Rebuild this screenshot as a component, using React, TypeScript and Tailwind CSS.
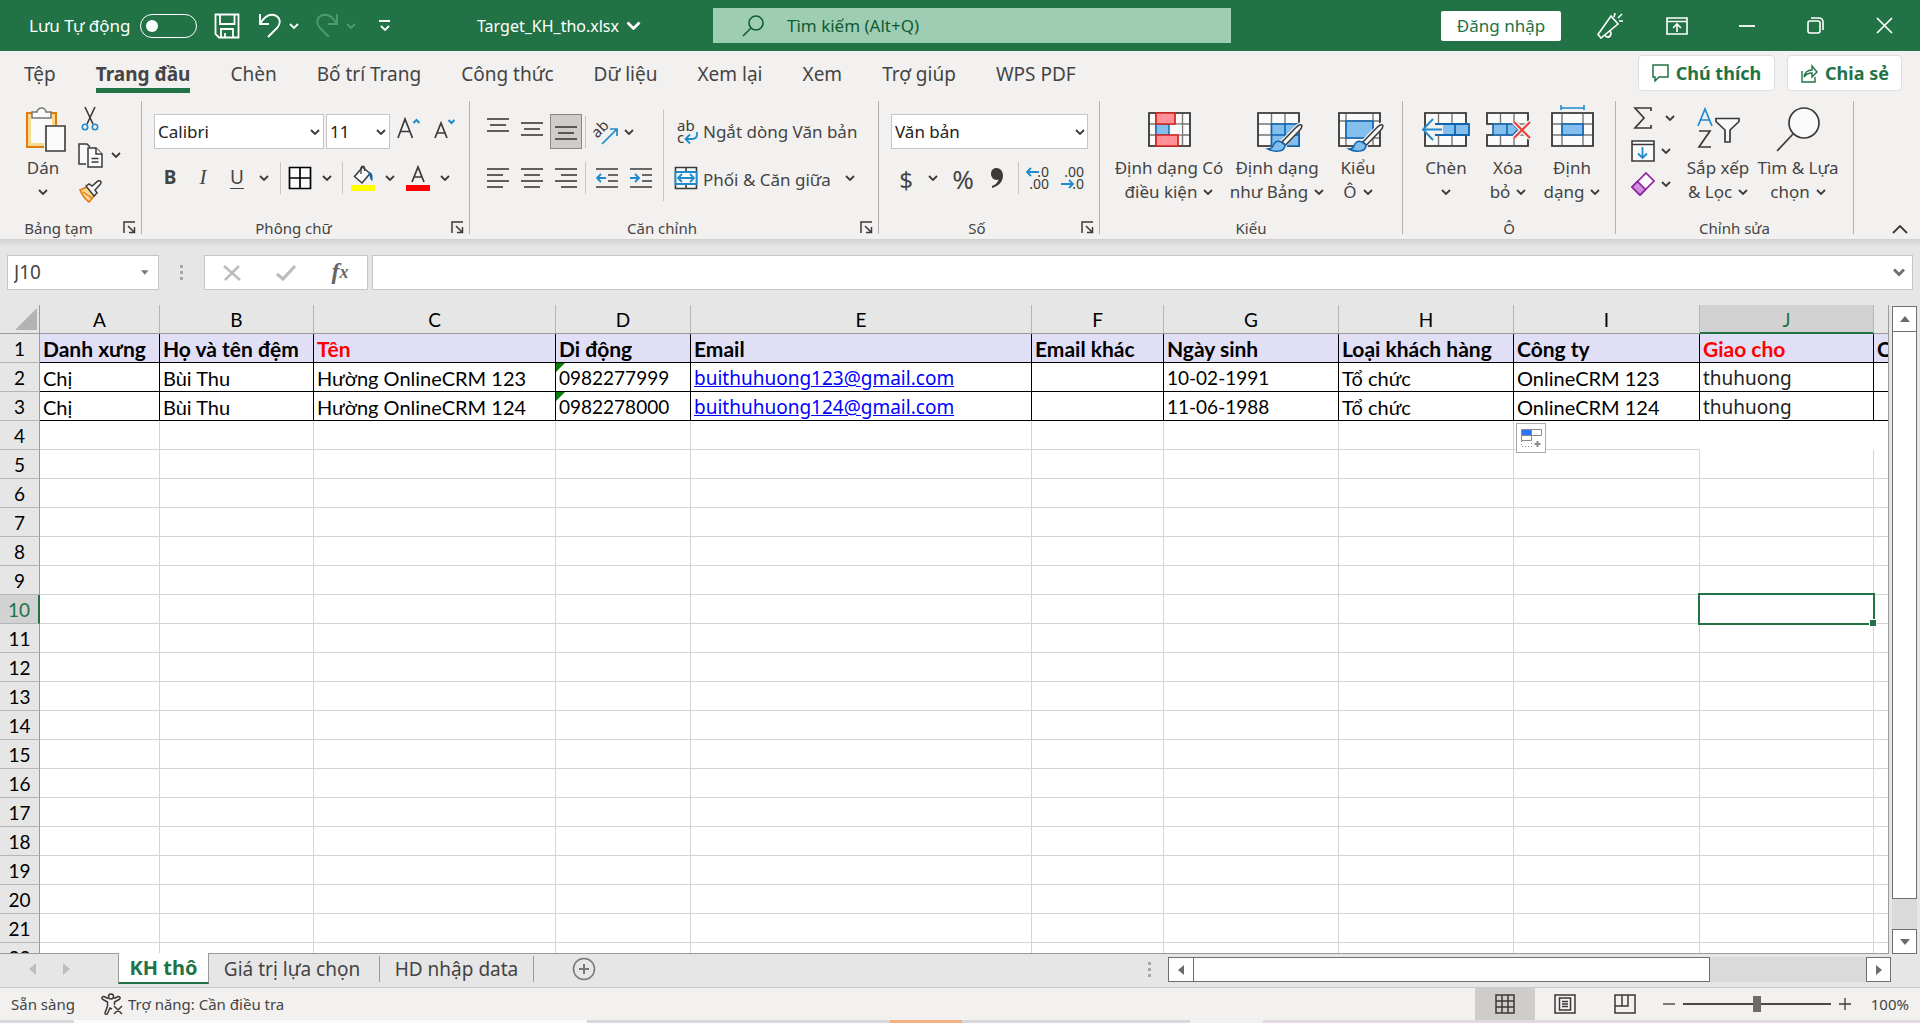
import React from 'react';
import clsx from 'clsx';

const INK = '#3b3a38';
const BLUE = '#1e8bcd';
const DEEP = '#0f64b0';
const SKY = '#83beec';

const menuTabs = ['Tệp', 'Trang đầu', 'Chèn', 'Bố trí Trang', 'Công thức', 'Dữ liệu', 'Xem lại', 'Xem', 'Trợ giúp', 'WPS PDF'];

const columns = [
  { id: 'A', width: 'w-[120px]' },
  { id: 'B', width: 'w-[154px]' },
  { id: 'C', width: 'w-[242px]' },
  { id: 'D', width: 'w-[135px]' },
  { id: 'E', width: 'w-[341px]' },
  { id: 'F', width: 'w-[132px]' },
  { id: 'G', width: 'w-[175px]' },
  { id: 'H', width: 'w-[175px]' },
  { id: 'I', width: 'w-[186px]' },
  { id: 'J', width: 'w-[174px]' },
  { id: 'K', width: '' },
];

const headings = ['Danh xưng', 'Họ và tên đệm', 'Tên', 'Di động', 'Email', 'Email khác', 'Ngày sinh', 'Loại khách hàng', 'Công ty', 'Giao cho', 'C'];
const requiredHeadings = ['Tên', 'Giao cho'];

const records = [
  ['Chị', 'Bùi Thu', 'Hường OnlineCRM 123', '0982277999', 'buithuhuong123@gmail.com', '', '10-02-1991', 'Tổ chức', 'OnlineCRM 123', 'thuhuong', ''],
  ['Chị', 'Bùi Thu', 'Hường OnlineCRM 124', '0982278000', 'buithuhuong124@gmail.com', '', '11-06-1988', 'Tổ chức', 'OnlineCRM 124', 'thuhuong', ''],
];

const emptyRows = Array.from({ length: 19 }, (_, i) => i + 4);

const Chevron = ({ className = 'w-[10px] h-[6px]', stroke = INK }: { className?: string; stroke?: string }) => (
  <svg viewBox="0 0 10 6" className={clsx('shrink-0', className)} fill="none" stroke={stroke} strokeWidth="1.8">
    <path d="M1 1l4 4 4-4" />
  </svg>
);

const Launcher = () => (
  <svg viewBox="0 0 13 13" className="w-[13px] h-[13px]" fill="none" stroke={INK} strokeWidth="1.5">
    <path d="M1 12V1h11M5 5l6 6M11.5 6v5.500H6" />
  </svg>
);

const Group = ({ label, launcher, className, children }: { label: string; launcher?: boolean; className: string; children: React.ReactNode }) => (
  <section aria-label={label} className={clsx('flex flex-col shrink-0 h-[133px] border-r border-[#b3b1af]', className)}>
    <div className="flex shrink-0 h-[114px]">{children}</div>
    <div className={clsx('flex items-center shrink-0 h-[19px] pt-[6px]', launcher && 'pr-[5px]')}>
      <span className={clsx('flex-1 text-center text-[15px] leading-5', launcher && 'pr-[6px]')}>{label}</span>
      {launcher && (
        <button aria-label={`Cài đặt ${label}`}>
          <Launcher />
        </button>
      )}
    </div>
  </section>
);

const BigButton = ({ icon, first, second, className }: { icon: React.ReactNode; first: string; second?: string; className: string }) => (
  <button className={clsx('flex flex-col items-center shrink-0 pt-[6px] text-[17px] leading-6 whitespace-nowrap', className)}>
    <span className="h-[45px] mb-1">{icon}</span>
    <span>{first}</span>
    <span className="flex items-center gap-[6px] h-6">
      {second}
      <Chevron />
    </span>
  </button>
);

const IconButton = ({ label, className, children }: { label: string; className?: string; children: React.ReactNode }) => (
  <button aria-label={label} className={clsx('flex items-center justify-center shrink-0 h-[35px]', className)}>
    {children}
  </button>
);

const Rule = () => <span className="shrink-0 w-px h-8 bg-[#c8c6c4]" />;

// Stacked strokes; each entry is [x1, x2] on a 22px wide glyph
const Lines = ({ rows }: { rows: number[][] }) => (
  <svg viewBox="0 0 22 20" className="w-[22px] h-5" stroke={INK} strokeWidth="1.6">
    {rows.map(([a, b], i) => (
      <path key={i} d={`M${a} ${1 + i * 6}H${b}`} />
    ))}
  </svg>
);

const PasteIcon = () => (
  <svg viewBox="0 0 42 45" className="w-[42px] h-[45px] ml-[5px]">
    <path d="M2 6h29v34H2z" fill="#fafafa" stroke="#e07b12" strokeWidth="2" />
    <path d="M4.500 8.500h24v29h-24z" fill="none" stroke="#f9d98f" strokeWidth="3" />
    <path d="M19 18h22v27H19z" fill="#f3f1f0" />
    <path d="M7 11V5h5c0-2 2-4 4.500-4S21 3 21 5h5v6z" fill="#fafafa" stroke="#797774" strokeWidth="1.500" />
    <path d="M21 19h19v25H21z" fill="#fafafa" stroke={INK} strokeWidth="1.600" />
  </svg>
);

const CutIcon = () => (
  <svg viewBox="0 0 18 26" className="w-[18px] h-[26px]" fill="none" strokeWidth="1.600">
    <path d="M4 1l8 17M14 1L6 18" stroke={INK} />
    <circle cx="4" cy="21" r="2.700" stroke={BLUE} />
    <circle cx="14" cy="21" r="2.700" stroke={BLUE} />
  </svg>
);

const CopyIcon = () => (
  <svg viewBox="0 0 25 25" className="w-[25px] h-[25px]" fill="#fafafa" stroke={INK} strokeWidth="1.500">
    <path d="M8 21H1V1h8l3 3" />
    <path d="M10 5h8l6 6v13H10z" />
    <path d="M18 5v6h6M13.500 15.500h7M13.500 19h7" />
  </svg>
);

const BrushIcon = () => (
  <svg viewBox="0 0 25 24" className="w-[25px] h-6">
    <path d="M2 11l7-3 8 8-6 7C7 20 4 16 2 11z" fill="#f9d98f" stroke="#e07b12" strokeWidth="1.600" />
    <path d="M5 13l9 6" stroke="#e07b12" strokeWidth="1.500" />
    <path d="M8 7l3-2 3 2 6-5c2-1 4 1 2.500 3L17 11l2 3-3 3z" fill="#fafafa" stroke={INK} strokeWidth="1.500" />
  </svg>
);

const GrowA = ({ up }: { up: boolean }) => (
  <svg viewBox="0 0 24 22" className="w-6 h-[22px]" fill="none" strokeWidth="1.700">
    {up ? (
      <>
        <path d="M1 21L8 2l7.500 19M3.500 14.500h9.500" stroke={INK} />
        <path d="M16.500 6l3-3 3 3" stroke={BLUE} strokeWidth="2" />
      </>
    ) : (
      <>
        <path d="M3 21L9 6l6 15M5 16h8" stroke={INK} />
        <path d="M16.500 3l3 3 3-3" stroke={BLUE} strokeWidth="2" />
      </>
    )}
  </svg>
);

const BordersIcon = () => (
  <svg viewBox="0 0 24 24" className="w-6 h-6" fill="#fafafa" stroke="#000" strokeWidth="1.700">
    <path d="M1.500 1.500h21v21h-21zM12 1.500v21M1.500 12h21" />
  </svg>
);

const FillIcon = () => (
  <svg viewBox="0 0 24 26" className="w-6 h-[26px]" fill="none">
    <path d="M10 4L3.500 11.500 11 18l8-9.500L11.500 2z" fill="#fafafa" stroke={INK} strokeWidth="1.500" />
    <path d="M10 9V2.500c1-2 3-1.500 3.500 0V6" stroke={INK} strokeWidth="1.300" />
    <path d="M17 7c4 0 5 2 4.500 9-3-1-2-5-4.500-9z" fill={DEEP} />
    <path d="M0 20h24v6H0z" fill="#ffff00" />
  </svg>
);

const FontColorIcon = () => (
  <svg viewBox="0 0 24 26" className="w-6 h-[26px]" fill="none">
    <path d="M6 17L12 2l6 15M8 12h8" stroke={INK} strokeWidth="1.700" />
    <path d="M0 20h24v6H0z" fill="#ff0000" />
  </svg>
);

const OrientIcon = () => (
  <svg viewBox="-2 0 26 26" className="w-[26px] h-[26px] overflow-visible" fill="none">
    <text x="3" y="19" transform="rotate(-45 4 19)" fontSize="15" fontFamily="Noto Sans" fill={INK}>ab</text>
    <path d="M8 25L23 10M16 10h7v7" stroke={BLUE} strokeWidth="1.700" />
  </svg>
);

const IndentIcon = ({ right }: { right?: boolean }) => (
  <svg viewBox="0 0 22 20" className="w-[22px] h-5" fill="none" strokeWidth="1.600">
    <path d="M0 1h22M12 7h10M12 13h10M0 19h22" stroke={INK} />
    <path d={right ? 'M0 10h9M5 6l4 4-4 4' : 'M10 10H1M5 6l-4 4 4 4'} stroke={BLUE} strokeWidth="1.900" />
  </svg>
);

const WrapIcon = () => (
  <svg viewBox="0 0 24 26" className="w-6 h-[26px] overflow-visible" fill="none">
    <text x="3" y="12" fontSize="15" fontFamily="Noto Sans" fill={INK}>ab</text>
    <text x="3" y="24" fontSize="15" fontFamily="Noto Sans" fill={INK}>c</text>
    <path d="M23 13v2c0 3-2 5-5 5h-6M16 15.500L11.500 20l4.500 4.500" stroke={BLUE} strokeWidth="1.800" />
  </svg>
);

const MergeIcon = () => (
  <svg viewBox="0 0 24 24" className="w-6 h-6" fill="#fafafa" strokeWidth="1.600">
    <path d="M1.500 1.500h21v21h-21zM12 1.500v21" stroke={INK} />
    <path d="M1.500 6h21v12h-21z" stroke={BLUE} strokeWidth="1.800" />
    <path d="M4 12h16M8 8l-4 4 4 4M16 8l4 4-4 4" stroke={BLUE} strokeWidth="1.800" fill="none" />
  </svg>
);

const DecimalIcon = ({ more }: { more?: boolean }) => (
  <svg viewBox="0 0 24 26" className="w-6 h-[26px] overflow-visible" fill="none">
    <text x="23" y="12" textAnchor="end" fontSize="14" fontFamily="Noto Sans" fill={INK}>{more ? '.0' : '.00'}</text>
    <text x="23" y="24" textAnchor="end" fontSize="14" fontFamily="Noto Sans" fill={INK}>{more ? '.00' : '.0'}</text>
    <path d={more ? 'M13 7H1M5 3L1 7l4 4' : 'M0 19h12M8 15l4 4-4 4'} stroke={BLUE} strokeWidth="1.800" />
  </svg>
);

const CondFormatIcon = () => (
  <svg viewBox="0 0 43 45" className="w-[43px] h-[45px]" fill="#fafafa" strokeWidth="1.400">
    <path d="M1 6h41v33H1zM1 17h41M1 28h41M8 6v33M34.500 6v33" stroke="#797774" />
    <path d="M1 6h41v33H1z" fill="none" stroke={INK} strokeWidth="1.700" />
    <path d="M21 17.700h12.800v9.600H21z" />
    <path d="M8 17h13v11H8z" fill={SKY} stroke={DEEP} />
    <path d="M8 6h19v11H8zM8 28h22v11H8z" fill="#ff9197" stroke="#d6231c" strokeWidth="1.700" />
  </svg>
);

const Paint = () => (
  <>
    <path d="M46 16c-2-2-5 0-7 2L22 35c-4 0-7 3-9 9 8 3 17 1 17-6z" fill="#f3f1f0" />
    <path d="M44.500 18c-2-1-4 1-6 3L25 35l3.500 3L42 24c2-2 3.500-4.500 2.500-6z" fill="#fafafa" stroke={INK} strokeWidth="1.500" />
    <path d="M24 35c-5-2-7 1-8 4s-3 3-5 3c5 3 17 4 17-4z" fill={SKY} stroke={DEEP} strokeWidth="1.500" />
  </>
);

const TableStyleIcon = () => (
  <svg viewBox="0 0 46 46" className="w-[46px] h-[46px] ml-[5px]" fill="#fafafa" strokeWidth="1.400">
    <path d="M1 6h41v33H1zM1 17h41M1 28h41M14.500 6v33M28 6v33" stroke="#797774" />
    <path d="M1 6h41v33H1z" fill="none" stroke={INK} strokeWidth="1.700" />
    <path d="M14.500 17H42v22H14.500zM14.500 28H42M28 17v22" fill={SKY} stroke={DEEP} strokeWidth="1.600" />
    <Paint />
  </svg>
);

const CellStyleIcon = () => (
  <svg viewBox="0 0 46 46" className="w-[46px] h-[46px] ml-[5px]" fill="#fafafa" strokeWidth="1.400">
    <path d="M1 6h41v33H1zM1 14h41M1 31h41M8 6v33M35 6v33" stroke="#797774" />
    <path d="M1 6h41v33H1z" fill="none" stroke={INK} strokeWidth="1.700" />
    <path d="M8 14h27v17H8z" fill={SKY} stroke={DEEP} strokeWidth="1.600" />
    <Paint />
  </svg>
);

const InsertIcon = () => (
  <svg viewBox="0 0 50 45" className="w-[50px] h-[45px]" fill="#fafafa" strokeWidth="1.400">
    <path d="M4 6h41v33H4zM17.500 6v33M31 6v33" stroke="#797774" />
    <path d="M4 6h41v33H4z" fill="none" stroke={INK} strokeWidth="1.700" />
    <path d="M8 17h40v11H8zM20 17v11M34 17v11" fill={SKY} stroke={DEEP} strokeWidth="1.800" />
    <path d="M14 10L1 22.500 14 35V27h8v-9h-8z" fill="#f3f1f0" />
    <path d="M21 22.500H2M12 12L2 22.500 12 33" fill="none" stroke={BLUE} strokeWidth="1.900" />
  </svg>
);

const DeleteIcon = () => (
  <svg viewBox="0 0 45 45" className="w-[45px] h-[45px]" fill="#fafafa" strokeWidth="1.400">
    <path d="M1 6h41v11H1zM1 28h41v11H1zM14.500 6v11M28 6v11M14.500 28v11M28 28v11" stroke="#797774" />
    <path d="M8 17H1V6h41v11M8 28H1v11h41V28" fill="none" stroke={INK} strokeWidth="1.700" />
    <path d="M7 17h20l5 5.500-5 5.500H7zM21 17v11" fill={SKY} stroke={DEEP} strokeWidth="1.600" />
    <path d="M28 15l16 16M44 15L28 31" stroke="#f3f1f0" strokeWidth="5" />
    <path d="M28 15l16 16M44 15L28 31" stroke="#ee3f3b" strokeWidth="2" />
  </svg>
);

const FormatIcon = () => (
  <svg viewBox="0 0 43 47" className="w-[43px] h-[47px] -mt-[2px]" fill="#fafafa" strokeWidth="1.400">
    <path d="M1 8h41v33H1zM1 19h41M1 30h41M11 8v33M32 8v33" stroke="#797774" />
    <path d="M1 8h41v33H1z" fill="none" stroke={INK} strokeWidth="1.700" />
    <path d="M11 19h21v11H11z" fill={SKY} stroke={DEEP} strokeWidth="1.600" />
    <path d="M10 3h23M10 0v5M33 0v5" stroke={BLUE} strokeWidth="1.600" />
  </svg>
);

const SigmaIcon = () => (
  <svg viewBox="0 0 20 22" className="w-5 h-[22px]" fill="none" stroke={INK} strokeWidth="1.700">
    <path d="M18 4V1H2l9 10-9 10h16v-3" />
  </svg>
);

const FillDownIcon = () => (
  <svg viewBox="0 0 24 22" className="w-6 h-[22px]" fill="#fafafa" strokeWidth="1.600">
    <path d="M1 1h22v20H1zM1 4.500h22" stroke={INK} />
    <path d="M11.500 7v11M7 13.500l4.500 4.500 4.500-4.500" stroke={BLUE} strokeWidth="1.800" fill="none" />
  </svg>
);

const EraserIcon = () => (
  <svg viewBox="0 0 24 24" className="w-6 h-6" strokeWidth="1.700" stroke="#8e24a0">
    <path d="M1 15L15 1l8 8L9 23z" fill="#fafafa" />
    <path d="M1 15l5.500-5.500 8 8L9 23z" fill="#d08fdc" />
  </svg>
);

const SortFilterIcon = () => (
  <svg viewBox="0 0 44 45" className="w-11 h-[45px]" fill="none" strokeWidth="1.700">
    <path d="M2 19L9 2l7 17M4.500 13h9" stroke={BLUE} />
    <path d="M3 24h11L3 40h12" stroke={INK} />
    <path d="M20 11.500h23v3L34 23v12h-5V23l-9-8.500z" fill="#fafafa" stroke={INK} />
  </svg>
);

const FindIcon = () => (
  <svg viewBox="0 0 44 45" className="w-11 h-[45px]" fill="none" stroke={INK} strokeWidth="1.700">
    <circle cx="28" cy="16" r="15" fill="#fafafa" />
    <path d="M17 27L1 44" />
  </svg>
);

const TitleBar = () => (
  <header className="flex items-center shrink-0 h-[51px] bg-[#217346] text-white text-[17px] whitespace-nowrap">
    <div className="flex items-center flex-1 pl-[29px]">
      <label htmlFor="autosave" className="w-[111px]">Lưu Tự động</label>
      <span className="relative flex w-[57px] h-6">
        <input id="autosave" type="checkbox" role="switch" className="appearance-none w-[57px] h-6 rounded-full border border-white" />
        <span className="absolute left-[6px] top-[6px] w-3 h-3 rounded-full bg-white pointer-events-none" />
      </span>
      <button aria-label="Lưu" className="ml-[17px]">
        <svg viewBox="0 0 26 26" className="w-[26px] h-[26px]" fill="none" stroke="#fff" strokeWidth="1.800">
          <path d="M1.500 1.500h23v23H5l-3.500-3.500zM6 1.500V11h14.500V1.500M7 24.500V16h12v8.500" />
          <path d="M11 24v-4" />
        </svg>
      </button>
      <button aria-label="Hoàn tác" className="flex items-center gap-[7px] ml-[18px]">
        <svg viewBox="0 0 24 25" className="w-6 h-[25px]" fill="none" stroke="#fff" strokeWidth="1.900">
          <path d="M2 1v10h9M2 11C6 4 11 1 16 2c7 2 7 9 3 13L10 24" />
        </svg>
        <Chevron stroke="#fff" />
      </button>
      <button aria-label="Làm lại" disabled className="flex items-center gap-[7px] ml-4">
        <svg viewBox="0 0 24 25" className="w-6 h-[25px]" fill="none" stroke="#4f9a70" strokeWidth="1.900">
          <path d="M22 1v10h-9M22 11C18 4 13 1 8 2c-7 2-7 9-3 13l9 9" />
        </svg>
        <Chevron stroke="#4f9a70" />
      </button>
      <button aria-label="Tùy chỉnh thanh công cụ" className="flex flex-col items-center gap-[3px] ml-[23px]">
        <span className="w-[11px] h-[2px] bg-white" />
        <Chevron stroke="#fff" />
      </button>
      <button className="flex items-center gap-[7px] ml-[87px] text-[16px]">
        Target_KH_tho.xlsx
        <Chevron className="w-[15px] h-[9px]" stroke="#fff" />
      </button>
    </div>
    <label className="flex items-center shrink-0 w-[518px] h-[35px] pl-[29px] bg-[#9fcdb3]">
      <svg viewBox="0 0 22 22" className="w-[22px] h-[22px]" fill="none" stroke="#0e5c2f" strokeWidth="1.600">
        <circle cx="14" cy="8" r="7" />
        <path d="M9 13l-8 8" />
      </svg>
      <input
        type="text"
        aria-label="Tìm kiếm"
        placeholder="Tìm kiếm (Alt+Q)"
        className="flex-1 ml-[23px] text-[17px] text-[#0e5c2f] placeholder:text-[#0e5c2f] outline-none"
      />
    </label>
    <div className="flex items-center justify-end shrink-0 w-[689px] pr-[27px]">
      <button className="w-[120px] h-[30px] rounded-xs bg-white text-[#217346]">Đăng nhập</button>
      <button aria-label="Sắp ra mắt" className="ml-[36px]">
        <svg viewBox="0 0 26 26" className="w-[26px] h-[26px]" fill="none" stroke="#fff" strokeWidth="1.600">
          <path d="M14 3l7 8L4 25l-3-3.500zM8 22c1 3 5 3 6-1 0-2-1-3-2-3M17 4l1-4M21 5l4-4M22 8h4" />
        </svg>
      </button>
      <button aria-label="Tùy chọn hiển thị dải băng" className="ml-[43px]">
        <svg viewBox="0 0 22 18" className="w-[22px] h-[18px]" fill="none" stroke="#fff" strokeWidth="1.600">
          <path d="M1 1h20v16H1zM1 4.500h20M11 15V7.500M7 11l4-4 4 4" />
        </svg>
      </button>
      <button aria-label="Thu nhỏ" className="ml-[51px]">
        <svg viewBox="0 0 16 16" className="w-4 h-4" stroke="#fff" strokeWidth="1.800"><path d="M0 8h16" /></svg>
      </button>
      <button aria-label="Khôi phục" className="ml-[52px]">
        <svg viewBox="0 0 17 17" className="w-[17px] h-[17px]" fill="none" stroke="#fff" strokeWidth="1.600">
          <rect x="1" y="4" width="12" height="12" rx="2" />
          <path d="M4 1h8a4 4 0 014 4v8" />
        </svg>
      </button>
      <button aria-label="Đóng" className="ml-[52px]">
        <svg viewBox="0 0 17 17" className="w-[17px] h-[17px]" fill="none" stroke="#fff" strokeWidth="1.700">
          <path d="M1 1l15 15M16 1L1 16" />
        </svg>
      </button>
    </div>
  </header>
);

const MenuBar = () => (
  <div className="flex items-center shrink-0 h-[44px] pl-6 pr-[18px] bg-[#f3f1f0]">
    <nav className="flex self-start flex-1 gap-10 text-[19px] whitespace-nowrap">
      {menuTabs.map((tab) => (
        <a
          key={tab}
          href="#"
          className={clsx(
            'flex items-center h-[42px] pt-[10px] border-b-[5px]',
            tab === 'Trang đầu' ? 'font-bold border-[#217346]' : 'border-transparent',
          )}
        >
          {tab}
        </a>
      ))}
    </nav>
    <div className="flex gap-3 text-[18px] font-bold text-[#217346]">
      <button className="flex items-center justify-center gap-[7px] w-[137px] h-9 rounded-sm border border-[#e1dfdd] bg-white">
        <svg viewBox="0 0 17 18" className="w-[17px] h-[18px]" fill="none" stroke="#217346" strokeWidth="1.500">
          <path d="M1 1h15v12H7l-4 4v-4H1z" />
        </svg>
        Chú thích
      </button>
      <button className="flex items-center justify-center gap-[7px] w-[115px] h-9 rounded-sm border border-[#e1dfdd] bg-white">
        <svg viewBox="0 0 18 19" className="w-[18px] h-[19px]" fill="none" stroke="#217346" strokeWidth="1.400">
          <path d="M2 7v11h13v-5M4 13c1-5 4-7 8-7V2l5 6-5 5v-4c-3 0-6 1-8 4z" />
        </svg>
        Chia sẻ
      </button>
    </div>
  </div>
);

const Ribbon = () => (
  <div className="flex shrink-0 h-[144px] pt-[6px] bg-[#f3f1f0]">
    <Group label="Bảng tạm" launcher className="w-[142px]">
      <BigButton icon={<PasteIcon />} first="Dán" className="w-[50px] ml-[18px]" />
      <div className="flex flex-col pl-[9px]">
        <IconButton label="Cắt" className="w-[26px] h-[36px]"><CutIcon /></IconButton>
        <div className="flex items-center h-[36px]">
          <IconButton label="Sao chép" className="w-[26px]"><CopyIcon /></IconButton>
          <IconButton label="Tùy chọn sao chép" className="w-[26px]"><Chevron /></IconButton>
        </div>
        <IconButton label="Bút sao chép định dạng" className="w-[26px] h-[36px]"><BrushIcon /></IconButton>
      </div>
    </Group>

    <Group label="Phông chữ" launcher className="w-[328px]">
      <div className="flex flex-col gap-[11px] pt-[13px] pl-[12px]">
        <div className="flex gap-[2px] text-[17px] text-[#222]">
          <span className="relative">
            <select aria-label="Phông chữ" className="appearance-none w-[170px] h-[35px] px-[3px] border border-[#c8c6c4] bg-white">
              <option>Calibri</option>
            </select>
            <Chevron className="absolute right-[4px] top-[15px] w-[10px] h-[6px] pointer-events-none" />
          </span>
          <span className="relative">
            <select aria-label="Cỡ phông" className="appearance-none w-16 h-[35px] px-[3px] border border-[#c8c6c4] bg-white">
              <option>11</option>
            </select>
            <Chevron className="absolute right-[4px] top-[15px] w-[10px] h-[6px] pointer-events-none" />
          </span>
          <IconButton label="Tăng cỡ phông" className="w-[34px] pb-2"><GrowA up /></IconButton>
          <IconButton label="Giảm cỡ phông" className="w-[32px] pb-2"><GrowA up={false} /></IconButton>
        </div>
        <div className="flex items-center text-[19px]">
          <IconButton label="Đậm" className="w-[32px] font-bold">B</IconButton>
          <IconButton label="Nghiêng" className="w-[34px] font-['Liberation_Serif',serif] italic text-[21px]">I</IconButton>
          <IconButton label="Gạch dưới" className="w-[34px] underline underline-offset-4">U</IconButton>
          <IconButton label="Kiểu gạch dưới" className="w-[20px]"><Chevron /></IconButton>
          <span className="w-[6px]" />
          <Rule />
          <IconButton label="Viền" className="w-[38px]"><BordersIcon /></IconButton>
          <IconButton label="Kiểu viền" className="w-[16px]"><Chevron /></IconButton>
          <span className="w-[7px]" />
          <Rule />
          <IconButton label="Màu tô" className="w-[40px]"><FillIcon /></IconButton>
          <IconButton label="Chọn màu tô" className="w-[14px]"><Chevron /></IconButton>
          <IconButton label="Màu chữ" className="w-[42px]"><FontColorIcon /></IconButton>
          <IconButton label="Chọn màu chữ" className="w-[12px]"><Chevron /></IconButton>
        </div>
      </div>
    </Group>

    <Group label="Căn chỉnh" launcher className="w-[409px]">
      <div className="flex flex-col gap-[11px] pt-[13px] pl-[11px] w-[193px]">
        <div className="flex items-center">
          <IconButton label="Căn trên" className="w-[34px] pb-2"><Lines rows={[[0, 22], [3, 19], [0, 22]]} /></IconButton>
          <IconButton label="Căn giữa dọc" className="w-[34px]"><Lines rows={[[0, 22], [3, 19], [0, 22]]} /></IconButton>
          <IconButton label="Căn dưới" className="w-8 mx-px pt-2 border border-[#8a8886] bg-[#cfcdcb]">
            <Lines rows={[[0, 22], [3, 19], [0, 22]]} />
          </IconButton>
          <span className="w-[2px]" />
          <Rule />
          <IconButton label="Hướng" className="w-[38px]"><OrientIcon /></IconButton>
          <Chevron />
        </div>
        <div className="flex items-center">
          <IconButton label="Căn trái" className="w-[34px]"><Lines rows={[[0, 22], [0, 16], [0, 22], [0, 16]]} /></IconButton>
          <IconButton label="Căn giữa" className="w-[34px]"><Lines rows={[[0, 22], [3, 19], [0, 22], [3, 19]]} /></IconButton>
          <IconButton label="Căn phải" className="w-[34px]"><Lines rows={[[0, 22], [6, 22], [0, 22], [6, 22]]} /></IconButton>
          <span className="w-[2px]" />
          <Rule />
          <IconButton label="Giảm thụt lề" className="w-[41px]"><IndentIcon /></IconButton>
          <IconButton label="Tăng thụt lề" className="w-[27px]"><IndentIcon right /></IconButton>
        </div>
      </div>
      <span className="w-px h-[91px] mt-[9px] bg-[#c8c6c4]" />
      <div className="flex flex-col gap-[11px] pt-[13px] pl-[10px] text-[17px] whitespace-nowrap">
        <button className="flex items-center gap-[5px] h-[35px]">
          <WrapIcon />
          Ngắt dòng Văn bản
        </button>
        <button className="flex items-center gap-[5px] h-[35px]">
          <MergeIcon />
          <span className="pt-1">Phối &amp; Căn giữa</span>
          <Chevron className="w-[10px] h-[6px] ml-[9px]" />
        </button>
      </div>
    </Group>

    <Group label="Số" launcher className="w-[221px]">
      <div className="flex flex-col gap-[11px] pt-[13px] pl-[12px]">
        <span className="relative text-[17px] text-[#222]">
          <select aria-label="Định dạng số" className="appearance-none w-[197px] h-[35px] px-[3px] border border-[#c8c6c4] bg-white">
            <option>Văn bản</option>
          </select>
          <Chevron className="absolute right-[4px] top-[15px] w-[10px] h-[6px] pointer-events-none" />
        </span>
        <div className="flex items-center">
          <IconButton label="Tiền tệ" className="w-[30px] pt-1 text-[24px]">$</IconButton>
          <IconButton label="Chọn tiền tệ" className="w-[24px]"><Chevron /></IconButton>
          <IconButton label="Phần trăm" className="w-[36px] pt-1 text-[26px]">%</IconButton>
          <IconButton label="Dấu phẩy" className="w-[32px]">
            <svg viewBox="0 0 12 20" className="w-3 h-5" fill={INK}>
              <path d="M5.500 0C9 0 12 3 12 7.500 12 14 7 18.500 1 20v-2c4-1.500 6-4 6.500-6.500C4 13 0 10 0 6c0-3.500 2-6 5.500-6z" />
            </svg>
          </IconButton>
          <span className="w-[5px]" />
          <Rule />
          <IconButton label="Tăng số thập phân" className="w-[38px]"><DecimalIcon more /></IconButton>
          <IconButton label="Giảm số thập phân" className="w-[32px]"><DecimalIcon /></IconButton>
        </div>
      </div>
    </Group>

    <Group label="Kiểu" className="w-[303px]">
      <BigButton icon={<CondFormatIcon />} first="Định dạng Có" second="điều kiện" className="w-[116px] ml-[11px]" />
      <BigButton icon={<TableStyleIcon />} first="Định dạng" second="như Bảng" className="w-[100px]" />
      <BigButton icon={<CellStyleIcon />} first="Kiểu" second="Ô" className="w-[62px]" />
    </Group>

    <Group label="Ô" className="w-[213px]">
      <BigButton icon={<InsertIcon />} first="Chèn" className="w-16 ml-[11px]" />
      <BigButton icon={<DeleteIcon />} first="Xóa" second="bỏ" className="w-[60px]" />
      <BigButton icon={<FormatIcon />} first="Định" second="dạng" className="w-[68px]" />
    </Group>

    <Group label="Chỉnh sửa" className="w-[238px]">
      <div className="flex flex-col pl-[15px] w-[64px]">
        <button aria-label="Tổng" className="flex items-center justify-between h-[33px] w-[44px] pl-[2px]"><SigmaIcon /><Chevron /></button>
        <button aria-label="Điền" className="flex items-center justify-between h-[33px] w-[40px]"><FillDownIcon /><Chevron /></button>
        <button aria-label="Xóa" className="flex items-center justify-between h-[33px] w-[40px]"><EraserIcon /><Chevron /></button>
      </div>
      <BigButton icon={<SortFilterIcon />} first="Sắp xếp" second="& Lọc" className="w-[76px]" />
      <BigButton icon={<FindIcon />} first="Tìm & Lựa" second="chọn" className="w-[84px]" />
    </Group>

    <div className="flex items-end justify-end flex-1 pr-3 pb-[5px]">
      <button aria-label="Thu gọn dải băng">
        <svg viewBox="0 0 16 9" className="w-4 h-[9px]" fill="none" stroke={INK} strokeWidth="1.800"><path d="M1 8l7-7 7 7" /></svg>
      </button>
    </div>
  </div>
);

const Dots = () => (
  <span className="flex flex-col gap-[3px]">
    <span className="w-[3px] h-[3px] bg-[#a6a6a6]" />
    <span className="w-[3px] h-[3px] bg-[#a6a6a6]" />
    <span className="w-[3px] h-[3px] bg-[#a6a6a6]" />
  </span>
);

const FormulaBar = () => (
  <div className="shrink-0">
    <div className="h-2 bg-linear-to-b from-[#d0d0d0] to-[#e6e6e6]" />
    <div className="flex items-center h-[58px] pl-[7px] pr-[7px] pb-[7px]">
      <div className="flex items-center w-[152px] h-[35px] pr-[9px] border border-[#c6c6c6] bg-white">
        <input aria-label="Hộp tên" defaultValue="J10" className="w-full pl-[6px] text-[19px] text-[#444] outline-none" />
        <svg viewBox="0 0 8 5" className="w-2 h-[5px]" fill="#777"><path d="M0 0h8L4 5z" /></svg>
      </div>
      <div className="flex justify-center w-[45px]"><Dots /></div>
      <div className="flex items-center w-[164px] h-[35px] border border-[#c6c6c6] bg-white">
        <IconButton label="Hủy" className="w-[54px]">
          <svg viewBox="0 0 18 16" className="w-[18px] h-4" fill="none" stroke="#bdbdbd" strokeWidth="2.600"><path d="M1 1l16 14M16 1L2 15" /></svg>
        </IconButton>
        <IconButton label="Nhập" className="w-[54px]">
          <svg viewBox="0 0 20 16" className="w-5 h-4" fill="none" stroke="#bdbdbd" strokeWidth="3.200"><path d="M1 9l6 5L19 1" /></svg>
        </IconButton>
        <IconButton label="Chèn hàm" className="w-[54px] pb-1 font-['Liberation_Serif',serif] italic font-bold text-[#666]">
          <span className="text-[24px]">f</span>
          <span className="pt-1 text-[18px]">x</span>
        </IconButton>
      </div>
      <div className="flex items-center flex-1 h-[35px] ml-1 pr-[7px] border border-[#c6c6c6] bg-white">
        <input aria-label="Thanh công thức" className="flex-1 px-2 text-[19px] outline-none" />
        <svg viewBox="0 0 12 9" className="w-3 h-[9px]" fill="none" stroke="#707070" strokeWidth="3"><path d="M1 1.500l5 5 5-5" /></svg>
      </div>
    </div>
  </div>
);

const FillOptions = () => (
  <button aria-label="Tùy chọn tự điền" className="absolute z-10 left-[2px] top-[2px] flex items-center justify-center w-[30px] h-[30px] border border-[#ababab] bg-white">
    <svg viewBox="0 0 22 20" className="w-[22px] h-5" fill="none" stroke="#8a8a8a">
      <path d="M1.500 1.500h20v6h-20zM11.500 1.500v6M1.500 7.500v5h10v-5" />
      <path d="M2 2h9v5H2z" fill="#2f74ff" stroke="none" />
      <path d="M1.500 13v5.500h10V13" strokeDasharray="1 2" />
      <path d="M17.500 13v6M14.500 16h6" strokeWidth="2" />
    </svg>
  </button>
);

const RowHeader = ({ n }: { n: number }) => (
  <th
    scope="row"
    className={clsx(
      'h-[29px] p-0 pt-[2px] border-b border-b-[#b5b5b5] font-normal leading-5',
      n === 10 ? 'border-r-2 border-r-[#217346] bg-[#d2d2d2] text-[#217346]' : 'border-r border-r-[#9b9b9b] bg-[#e6e6e6]',
    )}
  >
    {n}
  </th>
);

const Sheet = () => (
  <div className="flex-1 min-w-0 overflow-hidden border-r border-b border-[#9b9b9b] bg-white">
    <table className="w-full table-fixed border-separate border-spacing-0 font-[Lato,sans-serif] text-[19px] leading-5 text-black whitespace-nowrap">
      <colgroup>
        <col className="w-[40px]" />
        {columns.map((c) => (
          <col key={c.id} className={c.width} />
        ))}
      </colgroup>
      <thead>
        <tr>
          <th className="h-[29px] p-0 border-r border-b border-[#9b9b9b] bg-[#e6e6e6]">
            <svg viewBox="0 0 22 22" className="w-[22px] h-[22px] ml-auto mr-[2px]" fill="#b3b3b3"><path d="M22 0v22H0z" /></svg>
          </th>
          {columns.map((c) => (
            <th
              key={c.id}
              scope="col"
              className={clsx(
                'h-[29px] p-0 pt-[2px] border-r-[#b5b5b5] font-normal overflow-hidden',
                c.id !== 'K' && 'border-r',
                c.id === 'J' ? 'border-b-2 border-b-[#217346] bg-[#d2d2d2] text-[#217346]' : 'border-b border-b-[#9b9b9b] bg-[#e6e6e6]',
              )}
            >
              {c.id !== 'K' && c.id}
            </th>
          ))}
        </tr>
      </thead>
      <tbody>
        <tr>
          <RowHeader n={1} />
          {headings.map((text, i) => (
            <td
              key={text}
              className={clsx(
                'h-[29px] px-[3px] pt-[2px] pb-0 border-b border-black bg-[#e1dff6] text-[21px] font-bold overflow-hidden',
                columns[i].id !== 'K' && 'border-r',
                requiredHeadings.includes(text) && 'text-[#ff0000]',
              )}
            >
              {text}
            </td>
          ))}
        </tr>
        {records.map((record, r) => (
          <tr key={r}>
            <RowHeader n={r + 2} />
            {record.map((text, c) => {
              const { id } = columns[c];
              return (
                <td
                  key={id}
                  className={clsx(
                    'relative h-[29px] px-[3px] pt-[2px] pb-0 border-b border-black overflow-hidden',
                    id !== 'K' && 'border-r',
                    id === 'E' && "font-['Noto_Sans',sans-serif]",
                    id === 'J' && "font-['Noto_Sans',sans-serif] text-[#222]",
                    !['D', 'E', 'G', 'J'].includes(id) && 'text-[20px]',
                  )}
                >
                  {id === 'E' ? <a href={`mailto:${text}`} className="text-[#0000ff] underline">{text}</a> : text}
                  {id === 'D' && (
                    <svg viewBox="0 0 9 9" className="absolute left-0 top-0 w-[9px] h-[9px]" fill="#0b7a0b"><path d="M0 0h9L0 9z" /></svg>
                  )}
                </td>
              );
            })}
          </tr>
        ))}
        {emptyRows.map((n) => (
          <tr key={n}>
            <RowHeader n={n} />
            {columns.map(({ id }) => (
              <td
                key={id}
                className={clsx(
                  'relative h-[29px] p-0 border-b',
                  id !== 'K' && 'border-r',
                  n === 4 && id === 'I' && 'border-r-transparent border-b-[#d4d4d4]',
                  n === 4 && (id === 'J' || id === 'K') && 'border-transparent',
                  !(n === 4 && (id === 'I' || id === 'J' || id === 'K')) && 'border-[#d4d4d4]',
                )}
              >
                {n === 4 && id === 'I' && <FillOptions />}
                {n === 10 && id === 'J' && (
                  <span className="absolute z-10 -inset-[2px] border-2 border-[#217346]">
                    <span className="absolute -right-[4px] -bottom-[4px] w-2 h-2 border border-white bg-[#217346]" />
                  </span>
                )}
              </td>
            ))}
          </tr>
        ))}
      </tbody>
    </table>
  </div>
);

const Arrow = ({ d }: { d: string }) => (
  <svg viewBox="0 0 12 12" className="w-3 h-3" fill="#6b6b6b"><path d={d} /></svg>
);

const VerticalScroll = () => (
  <div className="flex flex-col shrink-0 w-[31px] pl-[3px] pr-[3px] pt-px">
    <button aria-label="Cuộn lên" className="flex items-center justify-center h-[26px] border border-[#707070] bg-white"><Arrow d="M1 9h10L6 3z" /></button>
    <div className="flex flex-col flex-1 bg-[#dadada]">
      <div className="h-[95%] border border-t-0 border-[#707070] bg-white" />
    </div>
    <button aria-label="Cuộn xuống" className="flex items-center justify-center h-[25px] border border-[#707070] bg-white"><Arrow d="M1 3h10L6 9z" /></button>
  </div>
);

const SheetTabs = () => (
  <div className="flex items-start shrink-0 h-[33px] text-[19px] whitespace-nowrap">
    <div className="flex items-center justify-between w-[118px] h-[30px] pl-[29px] pr-12">
      <button aria-label="Trang trước"><svg viewBox="0 0 7 12" className="w-[7px] h-3" fill="#bdbdbd"><path d="M7 0v12L0 6z" /></svg></button>
      <button aria-label="Trang sau"><svg viewBox="0 0 7 12" className="w-[7px] h-3" fill="#bdbdbd"><path d="M0 0v12l7-6z" /></svg></button>
    </div>
    <button className="w-[91px] h-[31px] -mt-px border-x border-b-2 border-x-[#9b9b9b] border-b-[#217346] bg-white text-[20px] leading-7 font-bold text-[#217346]">KH thô</button>
    <button className="w-[171px] h-[26px] mt-[2px] pr-1 border-r border-[#9b9b9b] leading-6">Giá trị lựa chọn</button>
    <button className="w-[154px] h-[26px] mt-[2px] border-r border-[#9b9b9b] leading-6">HD nhập data</button>
    <button aria-label="Thêm trang" className="ml-[38px] mt-[3px]">
      <svg viewBox="0 0 24 24" className="w-6 h-6" fill="none" stroke="#777" strokeWidth="1.500">
        <circle cx="12" cy="12" r="10.500" />
        <path d="M12 7v10M7 12h10" strokeWidth="2" />
      </svg>
    </button>
    <div className="flex items-center justify-end flex-1 h-[25px] mt-[3px] pr-[29px]">
      <Dots />
      <button aria-label="Cuộn trái" className="flex items-center justify-center w-[26px] h-[25px] ml-[17px] border border-[#707070] bg-white"><Arrow d="M9 1v10L3 6z" /></button>
      <div className="w-[672px] h-[25px] bg-[#dadada]">
        <div className="w-[516px] h-[25px] border border-l-0 border-[#707070] bg-white" />
      </div>
      <button aria-label="Cuộn phải" className="flex items-center justify-center w-[25px] h-[25px] border border-[#707070] bg-white"><Arrow d="M3 1v10l6-5z" /></button>
    </div>
  </div>
);

const StatusBar = () => (
  <footer className="flex items-center shrink-0 h-[33px] pl-[11px] pr-[11px] border-t border-[#c6c6c6] bg-[#f3f1f0] text-[15px] whitespace-nowrap">
    <span className="w-[90px]">Sẵn sàng</span>
    <button className="flex items-center gap-[5px]">
      <svg viewBox="0 0 22 22" className="w-[22px] h-[22px]" fill="none" stroke={INK} strokeWidth="1.500">
        <circle cx="10" cy="3.500" r="2.500" />
        <path d="M7 5.500L3 3.500c-2-.5-3 2-1 3L6.500 9v4L4 20c0 1.500 2 2 2.500.500L9 15l2 1M13 5.500l4-2c2-.5 3 2 1 3L13.500 9v3M13 13l8 8M21 13l-8 8" />
      </svg>
      Trợ năng: Cần điều tra
    </button>
    <div className="flex items-center justify-end flex-1">
      <IconButton label="Thông thường" className="w-[60px] h-8 bg-[#cfcdcb]">
        <svg viewBox="0 0 20 20" className="w-5 h-5" fill="none" stroke={INK} strokeWidth="1.500"><path d="M1 1h18v18H1zM1 7h18M1 13h18M7 1v18M13 1v18" /></svg>
      </IconButton>
      <IconButton label="Bố trí trang" className="w-[60px] h-8">
        <svg viewBox="0 0 22 20" className="w-[22px] h-5" fill="none" stroke={INK} strokeWidth="1.500"><path d="M1 1h20v18H1zM5.500 4h11v12h-11zM8 7.500h6M8 10h6M8 12.500h6" /></svg>
      </IconButton>
      <IconButton label="Xem trước ngắt trang" className="w-[60px] h-8">
        <svg viewBox="0 0 22 20" className="w-[22px] h-5" fill="none" stroke={INK} strokeWidth="1.500"><path d="M1 1h20v18H1zM1 12h13V1M8 1v11" /></svg>
      </IconButton>
      <button aria-label="Thu nhỏ" className="ml-[8px]">
        <svg viewBox="0 0 12 12" className="w-3 h-3" stroke={INK} strokeWidth="1.300"><path d="M0 6h12" /></svg>
      </button>
      <input
        type="range"
        aria-label="Thu phóng"
        defaultValue={50}
        className="appearance-none w-[148px] h-4 mx-2 bg-transparent [&::-webkit-slider-runnable-track]:h-[2px] [&::-webkit-slider-runnable-track]:bg-[#4a4846] [&::-webkit-slider-thumb]:appearance-none [&::-webkit-slider-thumb]:w-2 [&::-webkit-slider-thumb]:h-4 [&::-webkit-slider-thumb]:-mt-[7px] [&::-webkit-slider-thumb]:bg-[#6e6c6a]"
      />
      <button aria-label="Phóng to">
        <svg viewBox="0 0 12 12" className="w-3 h-3" stroke={INK} strokeWidth="1.300"><path d="M0 6h12M6 0v12" /></svg>
      </button>
      <span className="w-[58px] text-right">100%</span>
    </div>
  </footer>
);

const App: React.FC = () => {
  return (
    <div className="flex flex-col h-screen overflow-hidden bg-[#e6e6e6] font-['Noto_Sans',sans-serif] text-[#444]">
      <TitleBar />
      <MenuBar />
      <Ribbon />
      <FormulaBar />
      <main className="flex flex-1 min-h-0">
        <Sheet />
        <VerticalScroll />
      </main>
      <SheetTabs />
      <StatusBar />
      <div className="flex shrink-0 h-[3px] bg-[#d9d7dc]">
        <span className="w-[74px]" />
        <span className="w-[513px] bg-[#fafafa]" />
        <span className="w-[303px]" />
        <span className="w-[72px] bg-[#f4b183]" />
        <span className="w-[228px]" />
        <span className="w-[73px] bg-[#f3f1f0]" />
        <span className="flex-1 bg-[#e5d8e0]" />
      </div>
    </div>
  );
};

export default App;
